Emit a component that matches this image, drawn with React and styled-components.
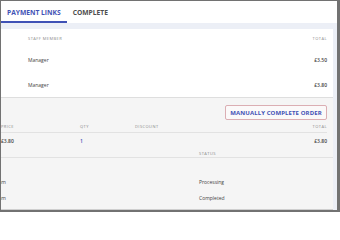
import React from "react";
import styled, { createGlobalStyle } from "styled-components";

const Global = createGlobalStyle`
  html, body { margin: 0; padding: 0; background: #fff; }
  body { font-family: "Open Sans", "Liberation Sans", sans-serif; }
  * { box-sizing: border-box; }
`;

const Frame = styled.div`
  width: 340px;
  height: 212px;
  border-style: solid;
  border-color: #727272;
  border-width: 1px 3px 2px 1px;
  background: #fff;
  overflow: hidden;
  display: flex;
  flex-direction: column;
`;

const Tabs = styled.div`
  display: flex;
  height: 22px;
  flex-shrink: 0;
`;

const Tab = styled.div`
  padding: 2px 6px 0;
  display: flex;
  align-items: center;
  font-size: 6.7px;
  font-weight: 700;
  color: ${(p) => (p.$active ? "#3f51b5" : "#4d4d4d")};
  border-bottom: 2px solid ${(p) => (p.$active ? "#3f51b5" : "transparent")};
`;

const Body = styled.div`
  flex: 1;
  background: #eceff6;
  padding: 6px 4px 0 0;
  display: flex;
  flex-direction: column;
`;

const StaffCard = styled.div`
  background: #fff;
  height: 69px;
  border-bottom: 1px solid #dedede;
  padding: 0 6px 0 27px;
  flex-shrink: 0;
`;

const Row = styled.div`
  display: flex;
  justify-content: space-between;
  align-items: center;
  height: ${(p) => p.$h}px;
`;

const Head = styled.span`
  font-size: 4px;
  letter-spacing: 0.45px;
  color: #8a8a8a;
  text-transform: uppercase;
`;

const Text = styled.span`
  font-size: 5px;
  color: #444;
  white-space: nowrap;
`;

const Amount = styled.span`
  font-size: 5px;
  font-weight: 600;
  color: #444;
  white-space: nowrap;
`;

const Qty = styled.span`
  font-size: 5px;
  font-weight: 600;
  color: #3f51b5;
`;

const OrderCard = styled.div`
  flex: 1;
  background: #f5f5f5;
  border-bottom: 1px solid #cfcfcf;
  overflow: hidden;
  padding-top: 7px;
`;

const Actions = styled.div`
  display: flex;
  justify-content: flex-end;
  padding-right: 6px;
`;

const Button = styled.button`
  height: 15px;
  width: 102px;
  padding: 0;
  border: 1px solid #dbaeb3;
  border-radius: 2px;
  background: #fbf9f9;
  color: #3f51b5;
  font-family: inherit;
  font-size: 6px;
  font-weight: 700;
  letter-spacing: 0.1px;
`;

const Table = styled.div`
  display: grid;
  grid-template-columns: 79px 55px 1fr auto;
  padding-right: 6px;
  align-items: center;
`;

const Cell = styled.div`
  display: flex;
  align-items: center;
  justify-content: ${(p) => (p.$end ? "flex-end" : "flex-start")};
  height: ${(p) => p.$h}px;
  border-bottom: ${(p) => (p.$line ? "1px solid #e2e2e2" : "none")};
`;

const StatusTable = styled.div`
  display: grid;
  grid-template-columns: 5px 193px 1fr;
`;

const StatusSpacer = styled.div`
  grid-column: 1 / -1;
  height: 16px;
`;

export default function App() {
  const staff = [
    { name: "Manager", total: "£3.50" },
    { name: "Manager", total: "£3.80" },
  ];
  const statuses = [
    { time: "10:24 am", status: "Processing" },
    { time: "10:31 am", status: "Completed" },
  ];
  return (
    <>
      <Global />
      <Frame>
        <Tabs>
          <Tab $active>PAYMENT LINKS</Tab>
          <Tab>COMPLETE</Tab>
        </Tabs>
        <Body>
          <StaffCard>
            <Row $h={18}>
              <Head>Staff member</Head>
              <Head>Total</Head>
            </Row>
            {staff.map((s, i) => (
              <Row key={i} $h={25.5}>
                <Text>{s.name}</Text>
                <Amount>{s.total}</Amount>
              </Row>
            ))}
          </StaffCard>
          <OrderCard>
            <Actions>
              <Button>MANUALLY COMPLETE ORDER</Button>
            </Actions>
            <Table>
              <Cell $h={13} $line><Head>Price</Head></Cell>
              <Cell $h={13} $line><Head>Qty</Head></Cell>
              <Cell $h={13} $line><Head>Discount</Head></Cell>
              <Cell $h={13} $line $end><Head>Total</Head></Cell>
              <Cell $h={16}><Amount>£3.80</Amount></Cell>
              <Cell $h={16}><Qty>1</Qty></Cell>
              <Cell $h={16} />
              <Cell $h={16} $end><Amount>£3.80</Amount></Cell>
            </Table>
            <StatusTable>
              <Cell $h={9} $line />
              <Cell $h={9} $line />
              <Cell $h={9} $line><Head>Status</Head></Cell>
              <StatusSpacer />
              {statuses.map((s, i) => (
                <React.Fragment key={i}>
                  <Cell $h={16} $end><Text>{s.time}</Text></Cell>
                  <Cell $h={16} />
                  <Cell $h={16}><Text>{s.status}</Text></Cell>
                </React.Fragment>
              ))}
            </StatusTable>
          </OrderCard>
        </Body>
      </Frame>
    </>
  );
}
